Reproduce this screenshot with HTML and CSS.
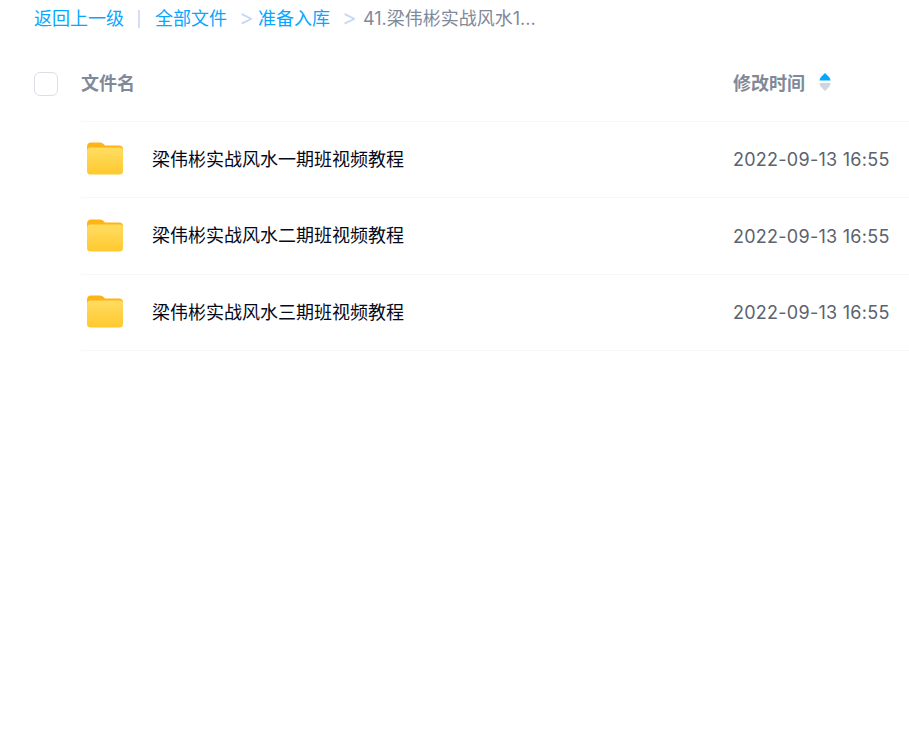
FILE: index.html
```html
<!DOCTYPE html>
<html lang="zh-CN">
<head>
  <meta charset="UTF-8">
  <meta name="viewport" content="width=device-width, initial-scale=1.0">
  <title>全部文件</title>
  <link rel="stylesheet" href="styles.css">
</head>
<body>
  <!-- Breadcrumb -->
  <nav class="crumbs">
    <a class="crumb-link" href="#">返回上一级</a>
    <span class="crumb-bar"></span>
    <a class="crumb-link" href="#">全部文件</a>
    <span class="crumb-arrow">&gt;</span>
    <a class="crumb-link" href="#">准备入库</a>
    <span class="crumb-arrow crumb-arrow-last">&gt;</span>
    <span class="crumb-current">41.梁伟彬实战风水1...</span>
  </nav>

  <!-- File list -->
  <section class="list">
    <div class="list-head">
      <span class="check"></span>
      <div class="head-row">
        <span class="col-name">文件名</span>
        <span class="col-time">
          修改时间
          <svg class="sort" width="12" height="20" viewBox="0 0 12 20">
            <path d="M6 1 L10 5 Q11.5 6.5 11.5 8.5 L0.5 8.5 Q0.5 6.5 2 5 Z" fill="#06a7ff"/>
            <path d="M6 19 L10 15 Q11.5 13.5 11.5 11 L0.5 11 Q0.5 13.5 2 15 Z" fill="#d0d4de"/>
          </svg>
        </span>
      </div>
    </div>

    <div class="row">
      <svg class="folder" width="36" height="33" viewBox="0 0 36 33">
        <defs>
          <linearGradient id="folderFill" x1="0" y1="0" x2="0" y2="1">
            <stop offset="0" stop-color="#ffdd62"/>
            <stop offset="1" stop-color="#ffc92f"/>
          </linearGradient>
        </defs>
        <path d="M0 5 Q0 0.5 4 0.5 L13 0.5 Q15.5 0.5 17 2.5 L18 3.5 L32 3.5 Q36 3.5 36 7.5 L36 14 L0 14 Z" fill="#ffb415"/>
        <rect x="0" y="5.5" width="36" height="27" rx="3.5" fill="url(#folderFill)"/>
      </svg>
      <span class="file-name">梁伟彬实战风水一期班视频教程</span>
      <span class="file-time">2022-09-13 16:55</span>
    </div>

    <div class="row">
      <svg class="folder" width="36" height="33" viewBox="0 0 36 33">
        <path d="M0 5 Q0 0.5 4 0.5 L13 0.5 Q15.5 0.5 17 2.5 L18 3.5 L32 3.5 Q36 3.5 36 7.5 L36 14 L0 14 Z" fill="#ffb415"/>
        <rect x="0" y="5.5" width="36" height="27" rx="3.5" fill="url(#folderFill)"/>
      </svg>
      <span class="file-name">梁伟彬实战风水二期班视频教程</span>
      <span class="file-time">2022-09-13 16:55</span>
    </div>

    <div class="row">
      <svg class="folder" width="36" height="33" viewBox="0 0 36 33">
        <path d="M0 5 Q0 0.5 4 0.5 L13 0.5 Q15.5 0.5 17 2.5 L18 3.5 L32 3.5 Q36 3.5 36 7.5 L36 14 L0 14 Z" fill="#ffb415"/>
        <rect x="0" y="5.5" width="36" height="27" rx="3.5" fill="url(#folderFill)"/>
      </svg>
      <span class="file-name">梁伟彬实战风水三期班视频教程</span>
      <span class="file-time">2022-09-13 16:55</span>
    </div>
  </section>
</body>
</html>
```

FILE: styles.css
```css
html, body {
  overflow: hidden;
}
body {
  margin: 0;
  height: 743px;
  background-color: #ffffff;
  font-family: Inter, "Noto Sans CJK SC", sans-serif;
  font-size: 18px;
}
a {
  text-decoration: none;
}
.crumbs {
  display: flex;
  align-items: center;
  height: 33px;
  padding-left: 34px;
  white-space: nowrap;
}
.crumb-link {
  color: #06a7ff;
}
.crumb-bar {
  width: 2px;
  height: 18px;
  margin: 5px 15px 0 14px;
  background-color: #d5dff3;
}
.crumb-arrow {
  width: 12px;
  margin: 0 7px 0 12px;
  color: #c4d8f4;
  font-size: 22px;
  line-height: 1;
}
.crumb-arrow-last {
  margin-right: 9px;
}
.crumb-current {
  color: #818999;
}
.list {
  margin-top: 13px;
}
.list-head {
  display: flex;
  padding-left: 34px;
}
.check {
  flex: none;
  box-sizing: border-box;
  width: 24px;
  height: 24px;
  margin: 26px 23px 0 0;
  border: 1px solid #dcdfe8;
  border-radius: 6px;
}
.head-row {
  flex: none;
  width: 828px;
  height: 75.5px;
  padding-bottom: 3.5px;
  box-sizing: border-box;
  display: flex;
  align-items: center;
  border-bottom: 1px solid #f7f7f9;
  color: #818999;
  font-weight: 700;
}
.col-name {
  width: 652px;
}
.col-time {
  display: flex;
  align-items: center;
  gap: 14px;
}
.row {
  display: flex;
  align-items: center;
  box-sizing: border-box;
  width: 828px;
  height: 76.5px;
  margin-left: 81px;
  border-bottom: 1px solid #f7f7f9;
}
.folder {
  flex: none;
  margin: 0 29px 1px 6px;
}
.file-name {
  width: 581px;
  margin-bottom: 3px;
  color: #03081a;
}
.file-time {
  margin-top: 1px;
  letter-spacing: 0.26px;
  color: #5b6270;
  white-space: nowrap;
}
```
